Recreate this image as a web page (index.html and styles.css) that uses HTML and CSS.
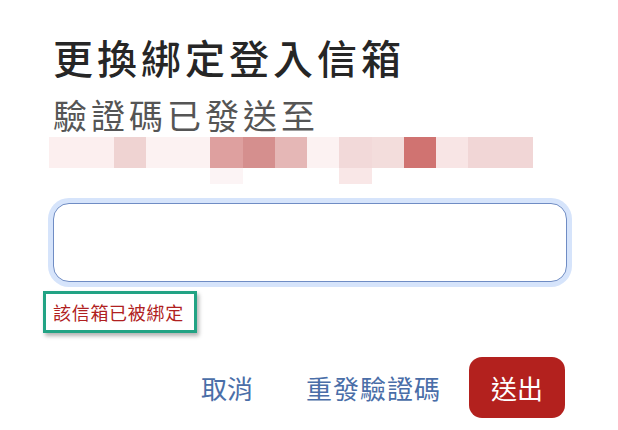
FILE: index.html
```html
<!DOCTYPE html>
<html lang="zh-Hant">
<head>
<meta charset="utf-8">
<title>更換綁定登入信箱</title>
<link rel="stylesheet" href="styles.css">
</head>
<body>
<div class="dialog">
  <h1 class="title">更換綁定登入信箱</h1>
  <p class="subtitle">驗證碼已發送至</p>
  <div class="mosaic" aria-hidden="true">
    <span class="c1"></span><span class="c1"></span><span class="c3"></span><span class="c4"></span><span class="c4"></span>
    <span class="c6"></span><span class="c7"></span><span class="c8"></span><span class="c4"></span><span class="c10"></span>
    <span class="c11"></span><span class="c12"></span><span class="c13"></span><span class="c14"></span><span class="c14"></span>
    <span class="w"></span><span class="w"></span><span class="w"></span><span class="w"></span><span class="w"></span>
    <span class="f1"></span><span class="w"></span><span class="w"></span><span class="w"></span><span class="f2"></span>
    <span class="w"></span><span class="w"></span><span class="w"></span><span class="w"></span><span class="w"></span>
  </div>
  <input class="code-input" type="text" aria-label="驗證碼">
  <div class="error">該信箱已被綁定</div>
  <div class="actions">
    <button class="text-btn cancel" type="button">取消</button>
    <button class="text-btn resend" type="button">重發驗證碼</button>
    <button class="submit" type="button">送出</button>
  </div>
</div>
</body>
</html>
```

FILE: styles.css
```css
html, body {
  margin: 0;
  padding: 0;
  background: #ffffff;
}

body {
  font-family: "Noto Sans CJK TC", "Noto Sans CJK SC", "Noto Sans", sans-serif;
}

.dialog {
  width: 514px;
  padding: 37px 51px 0 53px;
  display: flex;
  flex-direction: column;
  align-items: flex-start;
}

.title {
  margin: 0;
  font-size: 40px;
  line-height: 40px;
  letter-spacing: 4px;
  font-weight: 500;
  color: #262626;
}

.subtitle {
  margin: 21px 0 0;
  font-size: 34px;
  line-height: 34px;
  letter-spacing: 4px;
  font-weight: 400;
  color: #555555;
}

.mosaic {
  margin: 5px 0 0 -4px;
  display: grid;
  grid-template-columns: repeat(15, 32.27px);
  grid-template-rows: 31px 16px;
}

.mosaic .c1 { background: #fcefef; }
.mosaic .c3 { background: #efd3d2; }
.mosaic .c4 { background: #fcf2f2; }
.mosaic .c6 { background: #dea09f; }
.mosaic .c7 { background: #d58f8e; }
.mosaic .c8 { background: #e5b7b6; }
.mosaic .c10 { background: #f2d9d9; }
.mosaic .c11 { background: #f3dddc; }
.mosaic .c12 { background: #d07371; }
.mosaic .c13 { background: #f8e5e5; }
.mosaic .c14 { background: #f1d6d6; }
.mosaic .w { background: #ffffff; }
.mosaic .f1 { background: #fcf4f5; }
.mosaic .f2 { background: #f9e7e7; }

.code-input {
  box-sizing: border-box;
  margin: 19px 0 0;
  width: 514px;
  height: 79px;
  border: 1.5px solid #6f8cc4;
  border-radius: 16px;
  box-shadow: 0 0 0 5px #d6e4fb;
  background: #ffffff;
  outline: none;
  padding: 0 16px;
  font-size: 24px;
  font-family: inherit;
}

.error {
  box-sizing: border-box;
  margin: 9px 0 0 -10px;
  width: 154px;
  height: 42px;
  border: 3px solid #22a384;
  box-shadow: 2px 3px 4px rgba(0, 0, 0, 0.3);
  padding: 0 0 0 7px;
  display: flex;
  align-items: center;
  font-size: 18px;
  line-height: 18px;
  letter-spacing: 0.7px;
  color: #b02020;
}

.actions {
  align-self: stretch;
  margin: 24px 2px 0 0;
  display: flex;
  justify-content: flex-end;
  align-items: center;
}

.text-btn {
  border: none;
  background: none;
  padding: 0;
  font-family: inherit;
  font-size: 26px;
  line-height: 26px;
  color: #4a6ea8;
  cursor: pointer;
}

.cancel {
  margin-right: 53px;
}

.resend {
  letter-spacing: 1px;
  margin-right: 28px;
}

.submit {
  width: 96px;
  height: 61px;
  border: none;
  border-radius: 13px;
  background: #b3211e;
  color: #ffffff;
  font-family: inherit;
  font-size: 26px;
  line-height: 26px;
  padding: 0;
  cursor: pointer;
}
```
